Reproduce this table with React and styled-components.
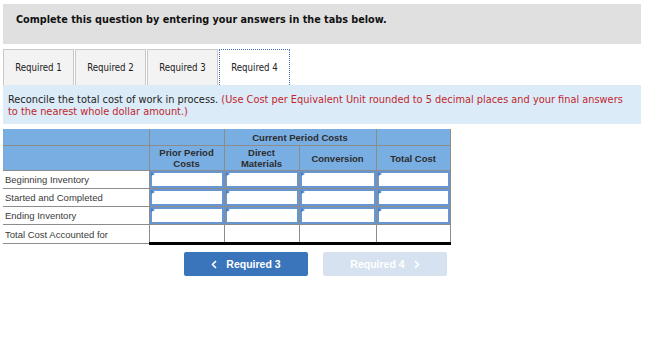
import React from "react";
import styled, { createGlobalStyle } from "styled-components";

const GlobalStyle = createGlobalStyle`
  body {
    margin: 0;
    background: #fff;
    font-family: "DejaVu Sans Condensed", "DejaVu Sans", sans-serif;
  }
`;

const Page = styled.div`
  width: 638px;
  padding: 4px 0 0 3px;
`;

const Banner = styled.div`
  height: 40px;
  box-sizing: border-box;
  padding: 9px 0 0 13px;
  background: #e0e0e0;
  color: #111;
  font-size: 10.75px;
  font-weight: bold;
`;

const Tabs = styled.div`
  display: flex;
  gap: 1px;
  margin-top: 5px;
`;

const Tab = styled.div`
  width: 71px;
  height: 36px;
  box-sizing: border-box;
  display: flex;
  align-items: center;
  justify-content: center;
  font-size: 9.6px;
  color: #222;
  background: ${p => (p.active ? "#fff" : "#f3f3f3")};
  border: 1px ${p => (p.active ? "dotted #3e6db3" : "solid #c9c9c9")};
  border-bottom: none;
`;

const Info = styled.div`
  height: 39px;
  box-sizing: border-box;
  padding: 9px 16px 0 5px;
  background: #dcebf8;
  color: #222;
  font-size: 10.9px;
  line-height: 12px;
`;

const Note = styled.span`
  color: #c0262c;
`;

const Table = styled.table`
  margin-top: 5px;
  width: 447px;
  border-collapse: collapse;
  table-layout: fixed;
  font-family: "Liberation Sans", Arial, sans-serif;
`;

const Head = styled.th`
  height: ${p => p.h}px;
  padding: 0;
  background: #79aee3;
  border: 1px solid #8c8c8c;
  border-left: ${p => (p.first ? "none" : "1px solid #8c8c8c")};
  border-top: none;
  color: #2c2c2c;
  font-size: 9.5px;
  font-weight: bold;
  line-height: 11px;
  text-align: center;
`;

const Label = styled.td`
  height: 17px;
  padding: 0 0 0 2px;
  border-bottom: 1px solid #8c8c8c;
  border-right: 1px solid #8c8c8c;
  color: #3a3a3a;
  font-size: 9.5px;
  white-space: nowrap;
`;

const Cell = styled.td`
  height: 17px;
  padding: 0;
  border: 1px solid #8c8c8c;
  border-top: ${p => (p.total ? "1px solid #000" : "1px solid #8c8c8c")};
  border-bottom: ${p => (p.total ? "3px solid #000" : "1px solid #8c8c8c")};
`;

const Entry = styled.div`
  position: relative;
  height: 17px;
  box-sizing: border-box;
  border: 2px solid #6797d2;
  background: #fff;
  /* small marker in the input's corner */
  &::before {
    content: "";
    position: absolute;
    top: -1px;
    left: -1px;
    border-top: 2px solid transparent;
    border-bottom: 2px solid transparent;
    border-left: 4px solid #3f7fcf;
  }
`;

const Nav = styled.div`
  display: flex;
  gap: 15px;
  margin-top: 7px;
  padding-left: 181px;
`;

const NavButton = styled.div`
  width: 124px;
  height: 24px;
  display: flex;
  align-items: center;
  justify-content: center;
  gap: 9px;
  border-radius: 2px;
  background: ${p => (p.disabled ? "#d6e2f0" : "#3a75bc")};
  color: #fff;
  font-family: "Liberation Sans", Arial, sans-serif;
  font-size: 10.5px;
  font-weight: bold;
  & svg {
    display: block;
  }
`;

const Chevron = ({ dir }) => (
  <svg width="6" height="9" viewBox="0 0 6 9">
    <path
      d={dir === "left" ? "M5 1 L1.5 4.5 L5 8" : "M1 1 L4.5 4.5 L1 8"}
      fill="none"
      stroke="#fff"
      strokeWidth="1.6"
    />
  </svg>
);

const rows = ["Beginning Inventory", "Started and Completed", "Ending Inventory"];

const App = () => (
  <Page>
    <GlobalStyle />
    <Banner>Complete this question by entering your answers in the tabs below.</Banner>
    <Tabs>
      <Tab>Required 1</Tab>
      <Tab>Required 2</Tab>
      <Tab>Required 3</Tab>
      <Tab active>Required 4</Tab>
    </Tabs>
    <Info>
      Reconcile the total cost of work in process.{" "}
      <Note>
        (Use Cost per Equivalent Unit rounded to 5 decimal places and your final answers to the
        nearest whole dollar amount.)
      </Note>
    </Info>
    <Table>
      <colgroup>
        <col style={{ width: 146 }} />
        <col style={{ width: 75 }} />
        <col style={{ width: 75 }} />
        <col style={{ width: 77 }} />
        <col style={{ width: 74 }} />
      </colgroup>
      <thead>
        <tr>
          <Head h={16} first />
          <Head h={16} />
          <Head h={16} colSpan={2}>Current Period Costs</Head>
          <Head h={16} />
        </tr>
        <tr>
          <Head h={24} first />
          <Head h={24}>Prior Period<br />Costs</Head>
          <Head h={24}>Direct<br />Materials</Head>
          <Head h={24}>Conversion</Head>
          <Head h={24}>Total Cost</Head>
        </tr>
      </thead>
      <tbody>
        {rows.map(r => (
          <tr key={r}>
            <Label>{r}</Label>
            {[0, 1, 2, 3].map(i => (
              <Cell key={i}><Entry /></Cell>
            ))}
          </tr>
        ))}
        <tr>
          <Label>Total Cost Accounted for</Label>
          {[0, 1, 2, 3].map(i => (
            <Cell key={i} total />
          ))}
        </tr>
      </tbody>
    </Table>
    <Nav>
      <NavButton>
        <Chevron dir="left" />
        Required 3
      </NavButton>
      <NavButton disabled>
        Required 4
        <Chevron dir="right" />
      </NavButton>
    </Nav>
  </Page>
);

export default App;
